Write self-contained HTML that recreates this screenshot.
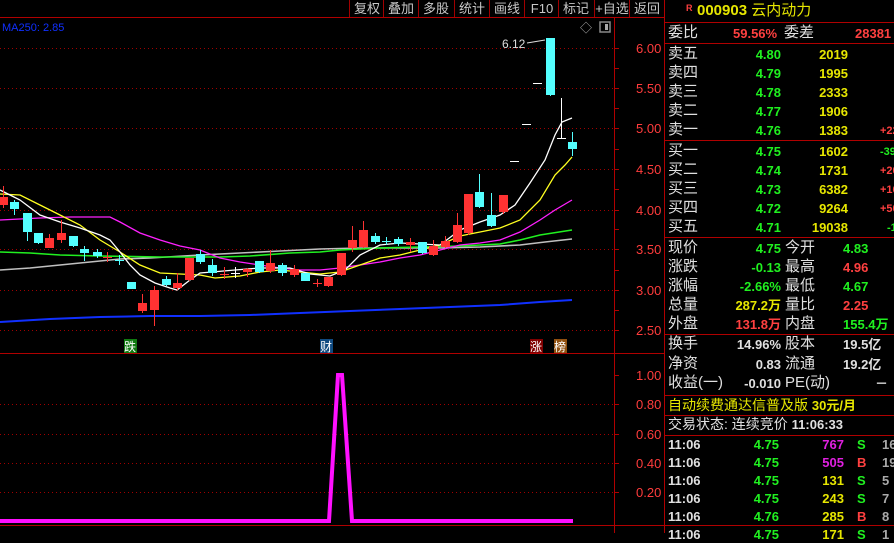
<!DOCTYPE html>
<html><head><meta charset="utf-8"><style>
*{margin:0;padding:0;box-sizing:border-box}
body{width:894px;height:533px;background:#000;overflow:hidden;position:relative;font-family:"Liberation Sans","Noto Sans CJK SC",sans-serif}
.t{position:absolute;white-space:nowrap;font-size:14px;line-height:16px}
.n{font-weight:bold;font-size:13px}
.r{text-align:right}
.g{color:#e0e0e0}.y{color:#e6e600}.gr{color:#20f020}.rd{color:#ff4040}.m{color:#e020e0}
.hl{position:absolute;left:665px;width:229px;height:1px;background:#b00000}
.tb{position:absolute;top:0;height:17px;width:35px;color:#c8c8c8;font-size:13px;line-height:17px;text-align:center;border-left:1px solid #a00000}
</style></head><body>
<svg width="894" height="533" style="position:absolute;left:0;top:0">
<g stroke="#a00000" stroke-width="1" stroke-dasharray="1,3">
<line x1="0" x2="614" y1="48.5" y2="48.5"/><line x1="0" x2="614" y1="88.5" y2="88.5"/><line x1="0" x2="614" y1="128.5" y2="128.5"/><line x1="0" x2="614" y1="169.5" y2="169.5"/><line x1="0" x2="614" y1="210.5" y2="210.5"/><line x1="0" x2="614" y1="249.5" y2="249.5"/><line x1="0" x2="614" y1="290.5" y2="290.5"/><line x1="0" x2="614" y1="330.5" y2="330.5"/>
<line x1="0" x2="614" y1="404.5" y2="404.5"/><line x1="0" x2="614" y1="434.5" y2="434.5"/><line x1="0" x2="614" y1="463.5" y2="463.5"/><line x1="0" x2="614" y1="492.5" y2="492.5"/>
</g>
<g stroke="#b00000" stroke-width="1">
<line x1="0" x2="664" y1="17.5" y2="17.5"/>
<line x1="0" x2="664" y1="353.5" y2="353.5"/>
<line x1="0" x2="894" y1="525.5" y2="525.5"/>
<line x1="614.5" x2="614.5" y1="18" y2="533"/>
<line x1="664.5" x2="664.5" y1="0" y2="533"/>
<line x1="614" x2="619" y1="48.5" y2="48.5"/><line x1="614" x2="619" y1="68.5" y2="68.5"/><line x1="614" x2="619" y1="88.5" y2="88.5"/><line x1="614" x2="619" y1="108.5" y2="108.5"/><line x1="614" x2="619" y1="128.5" y2="128.5"/><line x1="614" x2="619" y1="149.5" y2="149.5"/><line x1="614" x2="619" y1="169.5" y2="169.5"/><line x1="614" x2="619" y1="189.5" y2="189.5"/><line x1="614" x2="619" y1="210.5" y2="210.5"/><line x1="614" x2="619" y1="229.5" y2="229.5"/><line x1="614" x2="619" y1="249.5" y2="249.5"/><line x1="614" x2="619" y1="270.5" y2="270.5"/><line x1="614" x2="619" y1="290.5" y2="290.5"/><line x1="614" x2="619" y1="310.5" y2="310.5"/><line x1="614" x2="619" y1="330.5" y2="330.5"/>
<line x1="614" x2="619" y1="375.5" y2="375.5"/><line x1="614" x2="619" y1="404.5" y2="404.5"/><line x1="614" x2="619" y1="434.5" y2="434.5"/><line x1="614" x2="619" y1="463.5" y2="463.5"/><line x1="614" x2="619" y1="492.5" y2="492.5"/>
</g>
<g font-family="Liberation Sans" font-size="13" fill="#ff3c3c">
<text x="636" y="53">6.00</text><text x="636" y="93">5.50</text><text x="636" y="133">5.00</text><text x="636" y="174">4.50</text><text x="636" y="215">4.00</text><text x="636" y="254">3.50</text><text x="636" y="295">3.00</text><text x="636" y="335">2.50</text>
<text x="636" y="380">1.00</text><text x="636" y="409">0.80</text><text x="636" y="439">0.60</text><text x="636" y="468">0.40</text><text x="636" y="497">0.20</text>
</g>
<text x="2" y="31" font-family="Liberation Sans" font-size="11" fill="#1030ff">MA250: 2.85</text>
<text x="580" y="32" font-size="12" fill="#aaa">◇</text>
<rect x="600" y="22" width="10" height="10" fill="none" stroke="#888" stroke-width="1.5"/><rect x="605" y="24" width="3" height="6" fill="#aaa"/>
<g fill="none" stroke-width="1.3">
<polyline stroke="#1030ff" stroke-width="2" points="0,322 50,319 100,317 150,316 200,316 250,315 300,313 350,311 400,309 450,307 500,305 540,302 572,300"/>
<polyline stroke="#c0c0c0" stroke-width="1.6" points="0,270 30,268 60,265 90,262 120,259 150,258 200,255 240,253 280,251 320,249 360,248 400,248 440,248 480,247 520,245 545,242 572,239"/>
<polyline stroke="#20f020" stroke-width="1.6" points="0,252 30,253 60,255 100,256 160,257 220,257 250,256 290,253 320,252 340,250 380,248 420,247 460,246 500,244 520,240 540,235 572,230"/>
<polyline stroke="#ff20ff" points="0,220 40,218 70,217 110,217 120,222 140,233 160,240 180,246 200,250 220,258 240,262 260,265 280,268 300,270 320,270 340,268 360,265 380,262 400,258 420,255 440,250 460,245 480,243 500,240 520,232 540,220 555,210 572,200"/>
<polyline stroke="#ffff20" points="0,194 20,195 40,205 60,215 80,225 100,240 120,252 140,265 160,273 180,274 200,275 215,278 240,276 260,272 280,270 300,272 320,274 340,272 360,265 380,258 400,255 420,250 440,245 460,236 480,232 500,228 520,220 540,200 555,175 565,165 572,157"/>
<polyline stroke="#ffffff" points="0,190 10,195 20,200 40,215 60,222 80,228 100,235 110,240 120,252 130,265 140,275 155,283 170,288 177,290 190,280 200,273 212,272 235,270 260,268 290,268 310,274 330,276 345,270 360,255 380,245 400,243 420,244 440,245 460,230 480,222 500,215 515,205 530,183 545,160 555,135 562,122 572,118"/>
</g>
<g id="c"></g>
<text x="502" y="48" font-family="Liberation Sans" font-size="12" fill="#ddd">6.12</text>
<line x1="527" x2="545" y1="43" y2="40" stroke="#ddd"/>
<polyline fill="none" stroke="#ff10ff" stroke-width="4" points="0,521 329,521 338,375 342,375 352,521 573,521"/>
<g font-size="12" font-family="Noto Sans CJK SC" fill="#fff">
<rect x="124" y="339" width="13" height="14" fill="#107a10"/><text x="124" y="351">跌</text>
<rect x="320" y="339" width="13" height="14" fill="#104a80"/><text x="320" y="351">财</text>
<rect x="530" y="339" width="13" height="14" fill="#800000"/><text x="530" y="351">涨</text>
<rect x="554" y="339" width="13" height="14" fill="#905010"/><text x="554" y="351">榜</text>
</g>
</svg>
<script>
(function(){
var d=[[3,197,205,186,208,'r'],[14,202,209,200,215,'c'],[27,213,232,213,241,'c'],[38,233,243,233,244,'c'],[49,238,248,234,248,'r'],[61,233,240,220,243,'r'],[73,236,246,236,247,'c'],[84,249,253,246,261,'c'],[97,252,256,249,258,'c'],[107,257,258,252,262,'r'],[119,260,261,255,265,'c'],[131,282,289,282,289,'c'],[142,303,311,294,313,'r'],[154,290,310,286,326,'r'],[166,279,285,276,286,'c'],[177,283,288,273,290,'r'],[189,258,280,258,281,'r'],[200,254,262,250,264,'c'],[212,265,273,259,276,'c'],[224,274,275,267,279,'r'],[235,273,274,267,278,'w'],[247,269,272,268,277,'r'],[259,261,272,261,273,'c'],[270,263,271,250,273,'r'],[282,265,273,263,276,'c'],[294,269,275,265,277,'r'],[305,273,281,273,281,'c'],[317,283,284,279,287,'r'],[328,277,286,277,287,'r'],[341,253,275,253,276,'r'],[352,240,248,226,252,'r'],[363,230,247,221,248,'r'],[375,236,242,233,244,'c'],[386,241,242,237,245,'c'],[398,239,244,237,246,'c'],[410,242,245,238,252,'r'],[422,242,253,242,254,'c'],[433,246,255,240,256,'r'],[445,241,247,236,248,'r'],[457,225,242,213,243,'r'],[468,194,233,194,235,'r'],[479,192,207,174,208,'c'],[491,215,226,193,227,'c'],[503,195,212,195,214,'r'],[514,161,162,161,162,'w'],[526,124,125,124,125,'w'],[537,83,84,83,84,'w'],[550,38,95,38,96,'c'],[561,138,139,98,139,'w'],[572,142,149,132,156,'c']];
var col={r:'#ff3232',c:'#54ffff',w:'#ffffff'};
var g=document.getElementById('c'),NS='http://www.w3.org/2000/svg';
d.forEach(function(a){var c=col[a[5]];
var l=document.createElementNS(NS,'line');l.setAttribute('x1',a[0]+.5);l.setAttribute('x2',a[0]+.5);l.setAttribute('y1',a[3]);l.setAttribute('y2',a[4]);l.setAttribute('stroke',c);g.appendChild(l);
var r=document.createElementNS(NS,'rect');r.setAttribute('x',a[0]-4);r.setAttribute('y',a[1]);r.setAttribute('width',9);r.setAttribute('height',Math.max(1,a[2]-a[1]));r.setAttribute('fill',c);g.appendChild(r);});
})();
</script>
<div class="tb" style="left:349px">复权</div><div class="tb" style="left:383px">叠加</div><div class="tb" style="left:418px">多股</div><div class="tb" style="left:454px">统计</div><div class="tb" style="left:489px">画线</div><div class="tb" style="left:524px">F10</div><div class="tb" style="left:558px">标记</div><div class="tb" style="left:594px">+自选</div><div class="tb" style="left:629px">返回</div>
<div class="t rd" style="left:686px;top:0;font-size:9px;font-weight:bold">R</div>
<div class="t y" style="left:697px;top:3px;font-size:15px"><b>000903</b> 云内动力</div>
<div class="hl" style="top:22px"></div>
<div class="t g" style="left:668px;top:25px;font-size:15px">委比</div><div class="t rd n" style="left:733px;top:26px">59.56%</div><div class="t g" style="left:784px;top:25px;font-size:15px">委差</div><div class="t rd n" style="left:855px;top:26px">28381</div>
<div class="hl" style="top:43px"></div>
<div id="ob"></div>
<div class="hl" style="top:140px"></div>
<div class="hl" style="top:237px"></div>
<div class="hl" style="top:334px"></div>
<div class="hl" style="top:395px"></div>
<div class="t y" style="left:668px;top:397px;font-size:14px">自动续费通达信普及版 <b style="font-size:13px">30元/月</b></div>
<div class="hl" style="top:415px"></div>
<div class="t g" style="left:668px;top:416px">交易状态: 连续竞价 <b style="font-size:13px">11:06:33</b></div>
<div class="hl" style="top:435px"></div>
<script>
var rows=[[46,'卖五','4.80','2019',''],[65,'卖四','4.79','1995',''],[84,'卖三','4.78','2333',''],[103,'卖二','4.77','1906',''],[122,'卖一','4.76','1383','+22'],[143,'买一','4.75','1602','-39'],[162,'买二','4.74','1731','+20'],[181,'买三','4.73','6382','+160'],[200,'买四','4.72','9264','+50'],[219,'买五','4.71','19038','-1']];
var h='';
rows.forEach(function(r){h+='<div class="t g" style="left:668px;top:'+r[0]+'px;font-size:15px">'+r[1]+'</div><div class="t gr n r" style="left:700px;width:81px;top:'+(r[0]+1)+'px">'+r[2]+'</div><div class="t y n r" style="left:780px;width:68px;top:'+(r[0]+1)+'px">'+r[3]+'</div>';if(r[4])h+='<div class="t n '+(r[4][0]=='+'?'rd':'gr')+'" style="left:'+(894-r[4].length*7+ (r[4].length>3?14:7))+'px;top:'+(r[0]+1)+'px;font-size:11px">'+r[4]+'</div>';});
var q=[[240,'现价','4.75','gr','今开','4.83','gr'],[259,'涨跌','-0.13','gr','最高','4.96','rd'],[278,'涨幅','-2.66%','gr','最低','4.67','gr'],[297,'总量','287.2万','y','量比','2.25','rd'],[316,'外盘','131.8万','rd','内盘','155.4万','gr'],[336,'换手','14.96%','g','股本','19.5亿','g'],[356,'净资','0.83','g','流通','19.2亿','g'],[375,'收益(一)','-0.010','g','PE(动)','－','g']];
q.forEach(function(r){h+='<div class="t g" style="left:668px;top:'+r[0]+'px;font-size:15px">'+r[1]+'</div><div class="t n r '+r[3]+'" style="left:700px;width:81px;top:'+(r[0]+1)+'px">'+r[2]+'</div><div class="t g" style="left:785px;top:'+r[0]+'px;font-size:15px">'+r[4]+'</div><div class="t n '+r[6]+'" style="left:'+(r[5]=='－'?875:843)+'px;top:'+(r[0]+1)+'px">'+r[5]+'</div>';});
var tr=[[437,'4.75','767','m','S','gr','16'],[455,'4.75','505','m','B','rd','19'],[473,'4.75','131','y','S','gr','5'],[491,'4.75','243','y','S','gr','7'],[509,'4.76','285','y','B','rd','8'],[527,'4.75','171','y','S','gr','1']];
tr.forEach(function(r){h+='<div class="t g n" style="left:668px;top:'+r[0]+'px">11:06</div><div class="t gr n r" style="left:700px;width:79px;top:'+r[0]+'px">'+r[1]+'</div><div class="t n r '+r[3]+'" style="left:790px;width:54px;top:'+r[0]+'px">'+r[2]+'</div><div class="t n '+r[5]+'" style="left:857px;top:'+r[0]+'px">'+r[4]+'</div><div class="t n" style="left:882px;top:'+r[0]+'px;color:#aaa">'+r[6]+'</div>';});
document.getElementById('ob').innerHTML=h;
</script>
</body></html>
